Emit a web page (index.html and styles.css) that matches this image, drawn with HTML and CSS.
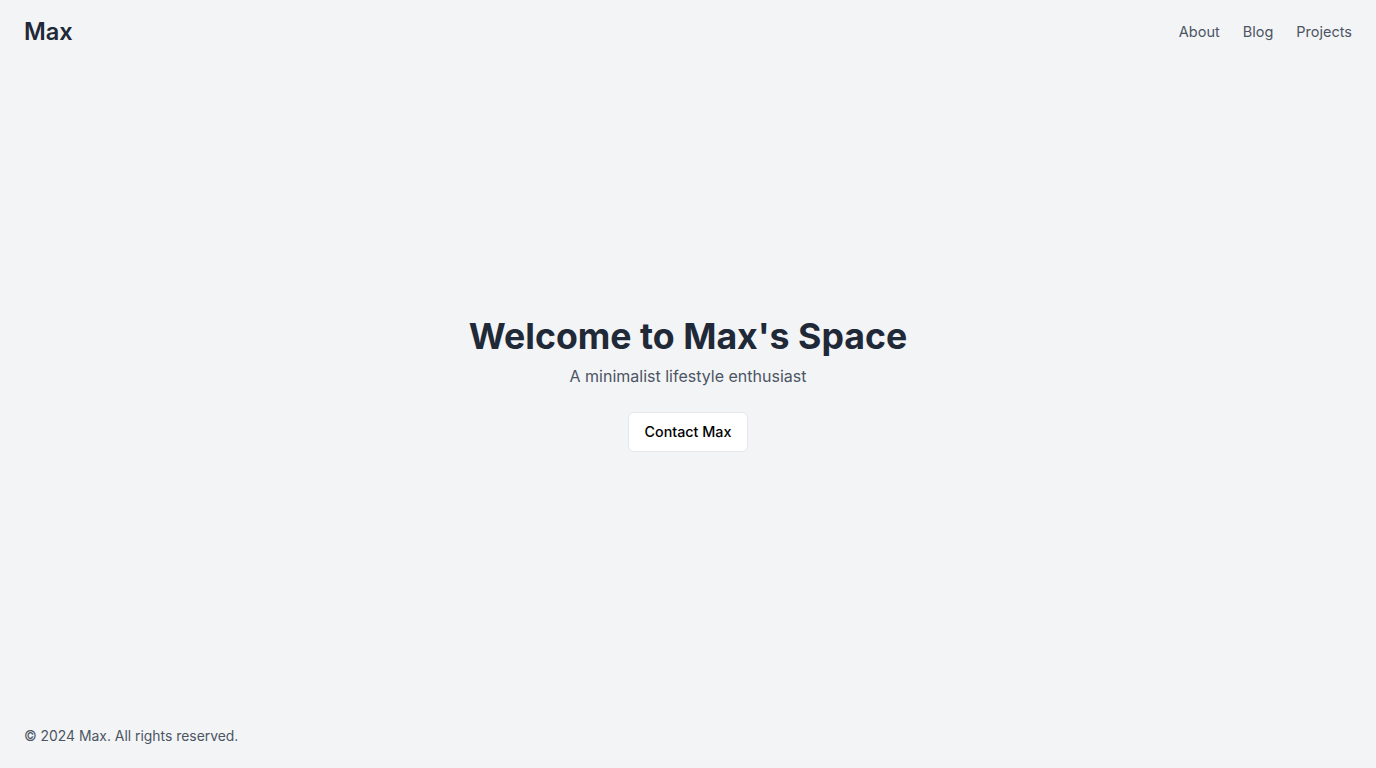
FILE: index.html
```html
<!DOCTYPE html>
<html lang="en">
<head>
<meta charset="utf-8">
<title>Max</title>
<link rel="stylesheet" href="styles.css">
</head>
<body>
<div class="page">
  <header class="header">
    <div class="logo">Max</div>
    <nav class="nav">
      <a href="#">About</a>
      <a href="#">Blog</a>
      <a href="#">Projects</a>
    </nav>
  </header>
  <main class="hero">
    <h1 class="title">Welcome to Max's Space</h1>
    <p class="subtitle">A minimalist lifestyle enthusiast</p>
    <button class="btn">Contact Max</button>
  </main>
  <footer class="footer">© 2024 Max. All rights reserved.</footer>
</div>
</body>
</html>
```
FILE: styles.css
```css
* { box-sizing: border-box; }
html, body { margin: 0; padding: 0; }
body {
  background: #f3f4f6;
  font-family: Inter, "Noto Sans", sans-serif;
  color: #1f2937;
}
.page {
  min-height: 100vh;
  display: flex;
  flex-direction: column;
}
.header {
  display: flex;
  justify-content: space-between;
  align-items: center;
  padding: 16px 24px;
}
.logo {
  font-size: 23.6px;
  line-height: 32px;
  font-weight: 600;
  color: #1f2937;
}
.nav {
  display: flex;
  gap: 23px;
}
.nav a {
  font-size: 14.5px;
  line-height: 24px;
  color: #4b5563;
  text-decoration: none;
}
.hero {
  flex: 1;
  display: flex;
  flex-direction: column;
  align-items: center;
  justify-content: center;
  padding-top: 2px;
}
.title {
  margin: 0;
  font-size: 35.7px;
  line-height: 40px;
  font-weight: 700;
  color: #1f2937;
}
.subtitle {
  margin: 8px 0 0;
  font-size: 16px;
  line-height: 24px;
  color: #4b5563;
}
.btn {
  margin-top: 24px;
  padding: 8px 16px;
  background: #fff;
  border: 1px solid #e5e7eb;
  border-radius: 6px;
  font-family: inherit;
  font-size: 14.3px;
  line-height: 22px;
  font-weight: 500;
  color: #000;
}
.footer {
  padding: 24px 24px 22px;
  font-size: 13.9px;
  line-height: 20px;
  color: #4b5563;
}
```
